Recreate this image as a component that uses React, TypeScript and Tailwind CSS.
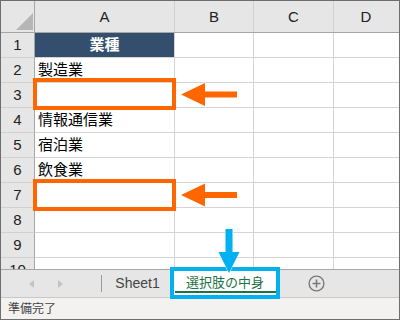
import React from "react";

const FONT = { fontFamily: '"Liberation Sans", "Noto Sans CJK JP", sans-serif' };

const rowsData: { n: string; a: string; head?: boolean }[] = [
  { n: "1", a: "業種", head: true },
  { n: "2", a: "製造業" },
  { n: "3", a: "" },
  { n: "4", a: "情報通信業" },
  { n: "5", a: "宿泊業" },
  { n: "6", a: "飲食業" },
  { n: "7", a: "" },
  { n: "8", a: "" },
  { n: "9", a: "" },
  { n: "10", a: "" },
];

export default function App() {
  return (
    <div
      className="relative w-[400px] h-[320px] border border-[#6e6e6e] bg-white overflow-hidden flex flex-col text-black"
      style={FONT}
    >
      {/* grid */}
      <div className="h-[268px] overflow-hidden flex flex-col shrink-0">
        {/* column header */}
        <div className="flex h-[32px] shrink-0 bg-[#e6e6e6] border-b border-[#a6a6a6] text-[15px] text-[#222]">
          <div className="w-[34px] border-r border-[#a6a6a6] relative flex items-center justify-center">
            <div className="w-0 h-0 border-l-[17px] border-l-transparent border-b-[17px] border-b-[#b6b6b6] ml-[13px] mt-[10px]" />
          </div>
          <div className="w-[140px] border-r border-[#d0d0d0] flex items-center justify-center pt-[1px]">A</div>
          <div className="w-[79px] border-r border-[#d0d0d0] flex items-center justify-center pt-[1px]">B</div>
          <div className="w-[80px] border-r border-[#d0d0d0] flex items-center justify-center pt-[1px]">C</div>
          <div className="flex-1 flex items-center justify-center pt-[1px] pr-[1px]">D</div>
        </div>
        {rowsData.map((r) => (
          <div key={r.n} className="flex h-[25px] shrink-0 text-[15px]">
            <div className="w-[34px] bg-[#e6e6e6] border-r border-b border-r-[#a6a6a6] border-b-[#d0d0d0] flex items-center justify-center text-[#222]">
              {r.n}
            </div>
            <div
              className={
                r.head
                  ? "w-[140px] bg-[#344f6e] border-r border-b border-[#d4d4d4] flex items-center justify-center text-white font-bold"
                  : "w-[140px] border-r border-b border-[#d4d4d4] flex items-center pl-[3px]"
              }
            >
              {r.a}
            </div>
            <div className="w-[79px] border-r border-b border-[#d4d4d4]" />
            <div className="w-[80px] border-r border-b border-[#d4d4d4]" />
            <div className="flex-1 border-b border-[#d4d4d4]" />
          </div>
        ))}
      </div>

      {/* sheet tab bar */}
      <div className="h-[29px] shrink-0 flex items-stretch bg-[#e6e6e6] border-t border-b border-t-[#a6a6a6] border-b-[#c8c8c8]">
        <div className="w-[100px] flex items-center">
          <div className="ml-[28px] w-0 h-0 border-t-[4px] border-t-transparent border-b-[4px] border-b-transparent border-r-[5px] border-r-[#c4c4c4]" />
          <div className="ml-[24px] w-0 h-0 border-t-[4px] border-t-transparent border-b-[4px] border-b-transparent border-l-[5px] border-l-[#c4c4c4]" />
        </div>
        <div className="w-px h-[17px] self-center bg-[#9a9a9a]" />
        <div className="w-[71px] flex items-center justify-center text-[14px] text-[#444]">Sheet1</div>
        <div className="w-[104px] bg-white relative flex items-center justify-center text-[13px] text-[#217346] pb-[1px]">
          選択肢の中身
          <div className="absolute left-[2px] right-[1px] bottom-[4px] h-[2px] bg-[#217346]" />
        </div>
        <div className="ml-[31px] flex items-center">
          <svg width="17" height="17" viewBox="0 0 17 17">
            <circle cx="8.5" cy="8.5" r="7.4" fill="none" stroke="#7a7a7a" strokeWidth="1.4" />
            <path d="M4.5 8.5h8M8.5 4.5v8" stroke="#7a7a7a" strokeWidth="1.6" />
          </svg>
        </div>
      </div>

      {/* status bar */}
      <div className="flex-1 bg-[#f3f2f1] flex items-center pl-[7px] text-[12px] text-[#444]">準備完了</div>

      {/* annotations */}
      <div className="absolute left-[32px] top-[77px] w-[143px] h-[32px] border-4 border-[#ff6600]" />
      <div className="absolute left-[32px] top-[178px] w-[143px] h-[32px] border-4 border-[#ff6600]" />
      <div className="absolute left-[169px] top-[266px] w-[110px] h-[32px] border-4 border-[#00b0f0]" />
      <svg className="absolute left-[-1px] top-[-1px] pointer-events-none" width="400" height="320" viewBox="0 0 400 320">
        <polygon
          points="181,94.5 205,83 205,91.5 237,91.5 237,97.5 205,97.5 205,106"
          fill="#ff6600"
          stroke="#ffffff"
          strokeWidth="1"
          paintOrder="stroke"
        />
        <polygon
          points="181,195 205,183.5 205,192 237,192 237,198 205,198 205,206.5"
          fill="#ff6600"
          stroke="#ffffff"
          strokeWidth="1"
          paintOrder="stroke"
        />
        <polygon
          points="225.5,229 232.5,229 232.5,252 239.5,252 229,273 218.5,252 225.5,252"
          fill="#00b0f0"
          stroke="#ffffff"
          strokeWidth="1"
          paintOrder="stroke"
        />
      </svg>
    </div>
  );
}
